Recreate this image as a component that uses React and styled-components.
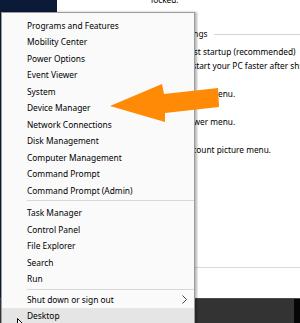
import React from "react";
import styled, { createGlobalStyle } from "styled-components";

const GlobalStyle = createGlobalStyle`
  html, body {
    margin: 0;
    padding: 0;
  }
  body {
    width: 300px;
    height: 323px;
    overflow: hidden;
    background: #fff;
    font-family: "Noto Sans", "Liberation Sans", sans-serif;
  }
`;

const Screen = styled.div`
  position: relative;
  width: 300px;
  height: 323px;
  overflow: hidden;
  display: grid;
  grid-template-columns: 57px 1fr;
  grid-template-rows: 1fr 25px;
`;

const Desktop = styled.div`
  background: #0b1a36;
`;

const Window = styled.div`
  background: #fff;
  display: flex;
  flex-direction: column;
  overflow: hidden;
  min-width: 0;
`;

const Content = styled.div`
  flex: 1;
  padding-left: 71px;
  margin-top: -21px;
  font-size: 8.3px;
  line-height: 14px;
  color: #000;
  white-space: nowrap;
`;

const Desc = styled.div`
  padding-left: 23px;
`;

const Heading = styled.div`
  display: flex;
  align-items: center;
  gap: 6px;
  margin: 20px 0 4px 7px;
  color: #0a0a0a;
`;

const Rule = styled.div`
  flex: 1;
  height: 1px;
  background: #d4d4d4;
`;

const OptionRow = styled.label`
  display: flex;
  align-items: center;
  gap: 5px;
  padding-left: 11px;
`;

const Check = styled.span`
  width: 10px;
  height: 10px;
  border: 1px solid #333;
  box-sizing: border-box;
`;

const WindowFooter = styled.div`
  height: 31px;
  border-top: 1px solid #dadada;
  box-sizing: border-box;
`;

const Taskbar = styled.div`
  grid-column: 1 / -1;
  display: flex;
  background: #333;
  border-top: 1px solid #454a55;
`;

const TaskbarEnd = styled.div`
  margin-left: auto;
  width: 6px;
  background: #060606;
`;

const Menu = styled.div`
  position: absolute;
  left: 1px;
  top: 12px;
  width: 194px;
  height: 330px;
  box-sizing: border-box;
  padding-top: 4px;
  background: #fafafa;
  border: 1px solid #9c9c9c;
  box-shadow: 2px 0 2px rgba(0, 0, 0, 0.28);
  font-size: 8.4px;
  color: #000;
`;

const MenuItem = styled.div`
  height: 16.5px;
  display: flex;
  align-items: center;
  justify-content: space-between;
  padding: 0 7px 0 25px;
  background: ${(p) => (p.$active ? "#e5e5e5" : "transparent")};
  white-space: nowrap;
`;

const MenuSep = styled.div`
  height: 1px;
  margin: ${(p) => p.$before}px 0 ${(p) => p.$after}px 25px;
  background: #d8d8d8;
`;

const Overlay = styled.svg`
  position: absolute;
  left: 0;
  top: 0;
  pointer-events: none;
`;

const Cursor = styled.svg`
  position: absolute;
  left: 17px;
  top: 318px;
`;

function Option({ label, desc }) {
  return (
    <>
      <OptionRow>
        <Check />
        <span>{label}</span>
      </OptionRow>
      <Desc>{desc}</Desc>
    </>
  );
}

const groups = [
  [
    "Programs and Features",
    "Mobility Center",
    "Power Options",
    "Event Viewer",
    "System",
    "Device Manager",
    "Network Connections",
    "Disk Management",
    "Computer Management",
    "Command Prompt",
    "Command Prompt (Admin)",
  ],
  ["Task Manager", "Control Panel", "File Explorer", "Search", "Run"],
];

export default function App() {
  return (
    <>
      <GlobalStyle />
      <Screen>
        <Desktop />
        <Window>
          <Content>
            <Desc>
              Require a password when your PC wakes from sleep or is
              <br />
              locked.
            </Desc>
            <Heading>
              <span>Shutdown settings</span>
              <Rule />
            </Heading>
            <Option
              label="Turn on fast startup (recommended)"
              desc="This helps start your PC faster after shutdown. Restart isn't affected."
            />
            <Option label="Sleep" desc="Show in Power menu." />
            <Option label="Hibernate" desc="Show in Power menu." />
            <Option label="Lock" desc="Show in account picture menu." />
          </Content>
          <WindowFooter />
        </Window>
        <Taskbar>
          <TaskbarEnd />
        </Taskbar>

        <Menu>
          {groups[0].map((t) => (
            <MenuItem key={t}>{t}</MenuItem>
          ))}
          <MenuSep $before={1.5} $after={3.5} />
          {groups[1].map((t) => (
            <MenuItem key={t}>{t}</MenuItem>
          ))}
          <MenuSep $before={2} $after={1} />
          <MenuItem>
            Shut down or sign out
            <svg width="5" height="9" viewBox="0 0 5 9">
              <polyline
                points="0.5,0.5 4.5,4.5 0.5,8.5"
                fill="none"
                stroke="#444"
                strokeWidth="1"
              />
            </svg>
          </MenuItem>
          <MenuItem $active>Desktop</MenuItem>
        </Menu>

        <Overlay width="300" height="323" viewBox="0 0 300 323">
          <polygon
            points="110,106 162,84 164,94 218,88 219,107 165,113 165,122"
            fill="#ff8a05"
          />
        </Overlay>
        <Cursor width="12" height="19" viewBox="0 0 12 19">
          <path
            d="M0.5 0.5 L0.5 15 L4 11.5 L6.5 17 L8.5 16 L6 10.5 L10.5 10.5 Z"
            fill="#fff"
            stroke="#000"
            strokeWidth="1"
          />
        </Cursor>
      </Screen>
    </>
  );
}
